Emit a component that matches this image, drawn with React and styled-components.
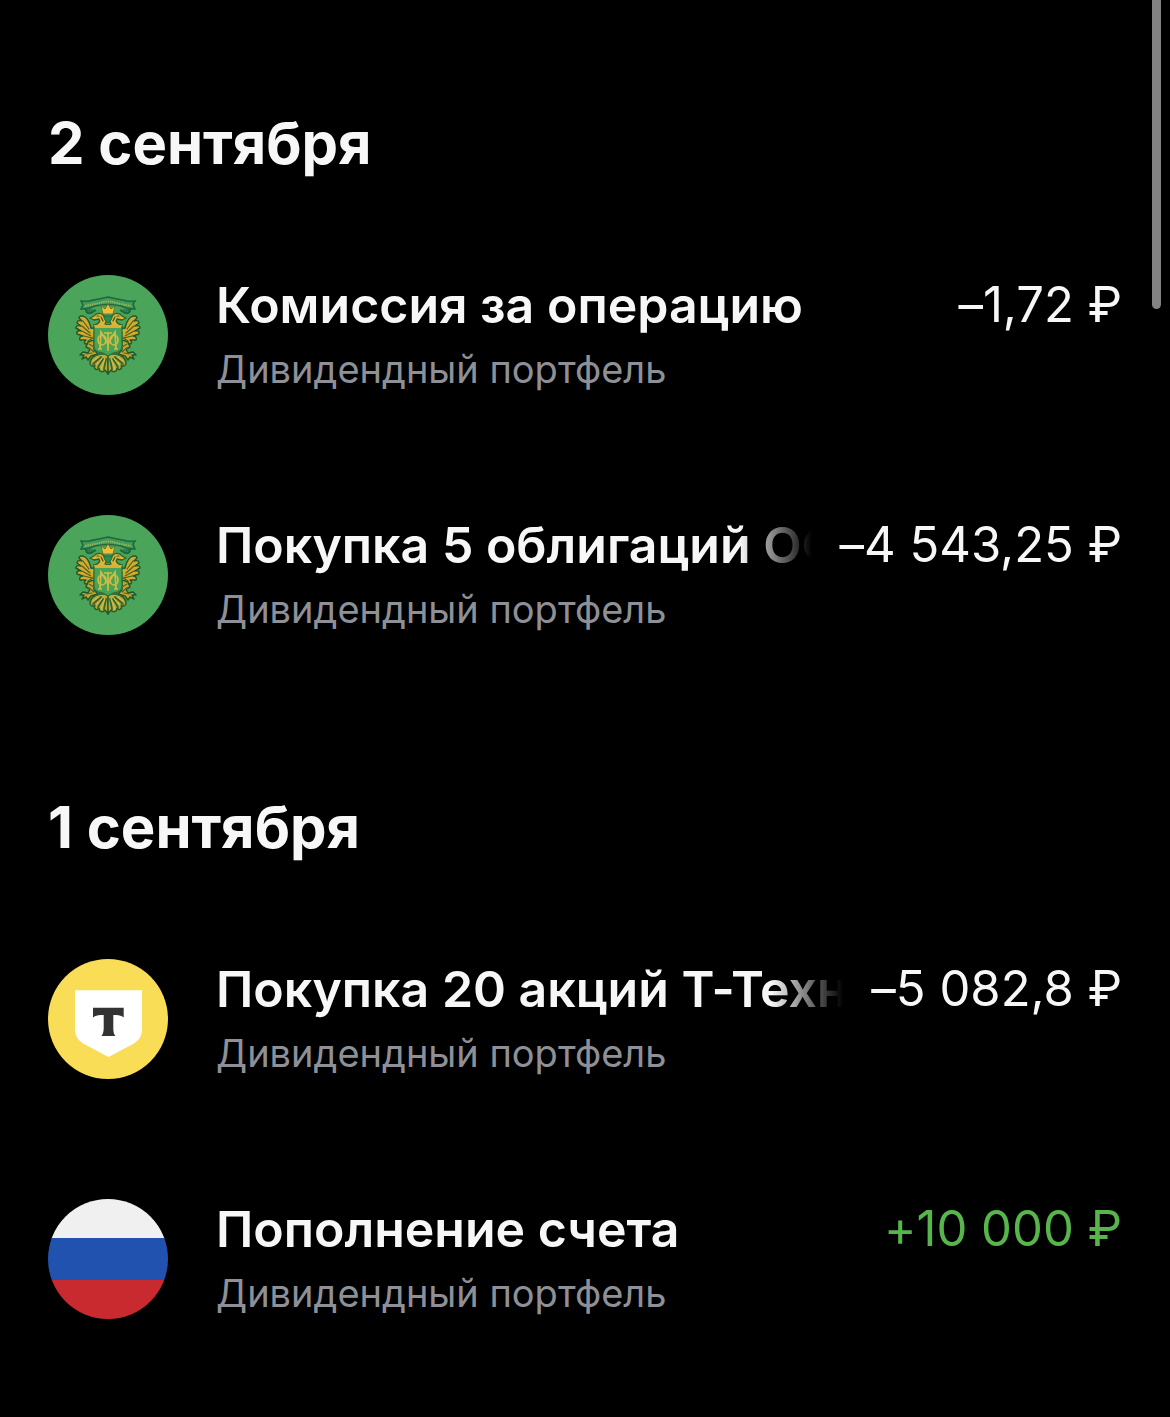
import React from 'react';
import styled, { createGlobalStyle, ThemeProvider } from 'styled-components';

const theme = {
  background: '#000000',
  textColor: '#f7f7f7',
  mutedColor: '#8f9097',
  incomeColor: '#57b54b',
  scrollColor: '#838383',
};

const GlobalStyle = createGlobalStyle`
  * {
    box-sizing: border-box;
  }

  body {
    margin: 0;
    background: ${({ theme }) => theme.background};
    color: ${({ theme }) => theme.textColor};
    font-family: Inter, 'Liberation Sans', sans-serif;
    font-variant-ligatures: no-contextual;
  }
`;

const Page = styled.main`
  position: relative;
  min-height: 100vh;
  padding: 107px 48px 98px;
  background: ${({ theme }) => theme.background};
`;

const ScrollThumb = styled.div`
  position: absolute;
  top: 0;
  right: 9px;
  width: 9px;
  height: 309px;
  border-radius: 0 0 5px 5px;
  background: ${({ theme }) => theme.scrollColor};
`;

const Day = styled.section`
  display: flex;
  flex-direction: column;

  & + & {
    margin-top: 156px;
  }
`;

const DayTitle = styled.h2`
  margin: 0 0 96px;
  font-size: 58px;
  font-weight: 700;
  line-height: 72px;
`;

const OperationList = styled.ul`
  display: flex;
  flex-direction: column;
  gap: 120px;
  margin: 0;
  padding: 0;
  list-style: none;
`;

const OperationRow = styled.li`
  display: flex;
  gap: 48px;
`;

const Logo = styled.svg`
  flex: none;
  display: block;
  width: 120px;
  height: 120px;
  border-radius: 50%;
`;

const OperationInfo = styled.div`
  flex: 1;
  min-width: 0;
`;

const OperationLine = styled.div`
  display: flex;
  justify-content: space-between;
  gap: 28px;
  line-height: 60px;
`;

const OperationTitle = styled.h3`
  flex: 0 1 auto;
  min-width: 0;
  margin: 0;
  overflow: hidden;
  font-size: 50px;
  font-weight: 600;
  white-space: nowrap;
  ${({ $faded }) => $faded && 'mask-image: linear-gradient(to right, #000 calc(100% - 72px), transparent);'}
`;

const Amount = styled.span`
  flex: none;
  font-size: 49px;
  font-weight: 400;
  white-space: nowrap;
  color: ${({ theme, $income }) => ($income ? theme.incomeColor : theme.textColor)};
`;

const Account = styled.p`
  margin: 8px 0 0;
  font-size: 38px;
  line-height: 52px;
  color: ${({ theme }) => theme.mutedColor};
`;

const EagleHalf = () => (
  <g strokeLinejoin="round" strokeLinecap="round">
    {/* wing */}
    <path
      d="M50 54 L43 53 C42 49 40 44 37 42 C34 40 31 41 31 43 C32 44 33 45 34 46 C31 45 29 46 29 48 L33 51 C30 50 28 51 28 53 L33 56 C30 55 28 57 29 59 L35 61 C32 61 31 63 32 65 L38 65 C36 67 36 69 38 69 L43 67 L48 66 Z"
      fill="#d5ab2d"
      stroke="#21592c"
      strokeWidth="1.5"
    />
    <path d="M35 46 L41 54 M34 51 L42 58 M34 56 L43 61 M36 61 L44 63 M40 66 L46 62 M46 57 V64" stroke="#4c5f27" strokeWidth="1.2" fill="none" />
    {/* head and neck */}
    <path
      d="M60 50 L57 49 C59 46 58 43 56 41 C53 37 48 38 46 41 L42 43 L46 45 L51 44 C53 47 50 49 46 50 L46 54 L60 54 Z"
      fill="#e0b335"
      stroke="#2b602d"
      strokeWidth="1.3"
    />
    <path d="M49 41 H51 M53 42 L55 46" stroke="#31592c" strokeWidth="1.2" />
    {/* leg and claw */}
    <path
      d="M46 65 L40 67 L38 72 L42 74 L40 78 L35 77 L32 80 L36 80 L34 84 L38 82 L40 85 L43 81 L50 79 L46 75 Z"
      fill="#c4a52f"
      stroke="#235a2c"
      strokeWidth="1.5"
    />
    <path d="M41 69 L46 72 M41 73 L46 77 M38 79 L44 78" stroke="#4e6229" strokeWidth="1.2" />
    {/* tail */}
    <path
      d="M52 79 C46 80 42 84 42 88 C42 91 45 92 47 90 C45 94 49 96 51 93 C51 97 55 98 57 95 L60 99 L60 79 Z"
      fill="#bda934"
      stroke="#235f2e"
      strokeWidth="1.5"
    />
    <path d="M53 82 L45 89 M55 84 L50 92 M58 84 L56 94" stroke="#2c6935" strokeWidth="1.8" />
    <path d="M51 82 L45 86 M54 84 L48 90 M57 84 L53 94" stroke="#e1bd49" strokeWidth="1" />
  </g>
);

const EmblemLogo = () => (
  <Logo viewBox="0 0 120 120" aria-hidden="true">
    <rect width="120" height="120" fill="#4aa55a" />
    <path d="M38 33 Q37 39 43 38 L48 35 M82 33 Q83 39 77 38 L72 35" fill="#2c8150" stroke="#20693c" strokeWidth="2" />
    <EagleHalf />
    <g transform="matrix(-1 0 0 1 120 0)">
      <EagleHalf />
    </g>
    <path
      d="M33 26 Q40 27 45 25 Q52 24 60 22 Q68 24 75 25 Q80 27 87 26 L85 29 L87 34 Q79 34 73 31 Q60 28 47 31 Q41 34 33 34 L35 30 Z"
      fill="#41995a"
      stroke="#1e693b"
      strokeWidth="1.5"
    />
    <path d="M37 31 Q46 29 52 28 Q60 25 68 28 Q74 29 83 31" fill="none" stroke="#91b85d" strokeWidth="2" strokeDasharray="1.5 0.8" />
    <path d="M55 39 L53 31 L57 34 L60 29 L63 34 L67 31 L65 39 Z" fill="#f0bd35" stroke="#626c29" strokeWidth="0.8" />
    <path d="M56 41 H64 V43 Q63 46 60 48 Q57 46 56 43 Z" fill="#2a8d50" stroke="#27653a" strokeWidth="1" />
    <path d="M46 52 H74 V72 C74 76 69 78 65 78 L60 81 L55 78 C51 78 46 76 46 72 Z" fill="#45a457" stroke="#2d6f38" strokeWidth="1.2" />
    <path d="M46 50 H74 L73 53 H47 Z" fill="#d5b236" />
    <g fill="none" stroke="#d1bb42" strokeWidth="1.7">
      <path d="M52 74 L53 57 L60 69 L67 57 L68 74" />
      <path d="M60 57 V76 M56 58 H64 M50 74 H54 M66 74 H70" />
      <ellipse cx="54" cy="65" rx="4" ry="5" />
      <ellipse cx="66" cy="65" rx="4" ry="5" />
    </g>
  </Logo>
);

const BankLogo = () => (
  <Logo viewBox="0 0 120 120" aria-hidden="true">
    <rect width="120" height="120" fill="#f9dd57" />
    <path d="M27 31.3 H94 V70 C94 78 90 82 84 85.5 L60.5 98 L37 85.5 C31 82 27 78 27 70 Z" fill="#ffffff" />
    <path
      d="M45 48.7 H75.7 V58.5 C73.5 56.5 70.5 56 65.3 56 V69 C65.3 73 66 75.5 67.5 77 H53.3 C54.8 75.5 55.7 73 55.7 69 V56 C50.5 56 47.2 56.5 45 58.5 Z"
      fill="#333333"
    />
  </Logo>
);

const FlagLogo = () => (
  <Logo viewBox="0 0 120 120" aria-hidden="true">
    <rect width="120" height="40" fill="#f0f0f0" />
    <rect y="39" width="120" height="42" fill="#2152af" />
    <rect y="81" width="120" height="39" fill="#c92a30" />
  </Logo>
);

const days = [
  {
    date: '2 сентября',
    operations: [
      { logo: EmblemLogo, title: 'Комиссия за операцию', amount: '–1,72 ₽' },
      { logo: EmblemLogo, title: 'Покупка 5 облигаций ОФ', amount: '–4 543,25 ₽', faded: true },
    ],
  },
  {
    date: '1 сентября',
    operations: [
      { logo: BankLogo, title: 'Покупка 20 акций Т-Техн', amount: '–5 082,8 ₽', faded: true },
      { logo: FlagLogo, title: 'Пополнение счета', amount: '+10 000 ₽', income: true },
    ],
  },
];

const Operation = ({ logo: LogoIcon, title, amount, faded, income }) => (
  <OperationRow>
    <LogoIcon />
    <OperationInfo>
      <OperationLine>
        <OperationTitle $faded={faded}>{title}</OperationTitle>
        <Amount $income={income}>{amount}</Amount>
      </OperationLine>
      <Account>Дивидендный портфель</Account>
    </OperationInfo>
  </OperationRow>
);

const App = () => (
  <ThemeProvider theme={theme}>
    <GlobalStyle />
    <Page>
      {days.map((day) => (
        <Day key={day.date}>
          <DayTitle>{day.date}</DayTitle>
          <OperationList>
            {day.operations.map((operation) => (
              <Operation key={operation.title} {...operation} />
            ))}
          </OperationList>
        </Day>
      ))}
      <ScrollThumb />
    </Page>
  </ThemeProvider>
);

export default App;
